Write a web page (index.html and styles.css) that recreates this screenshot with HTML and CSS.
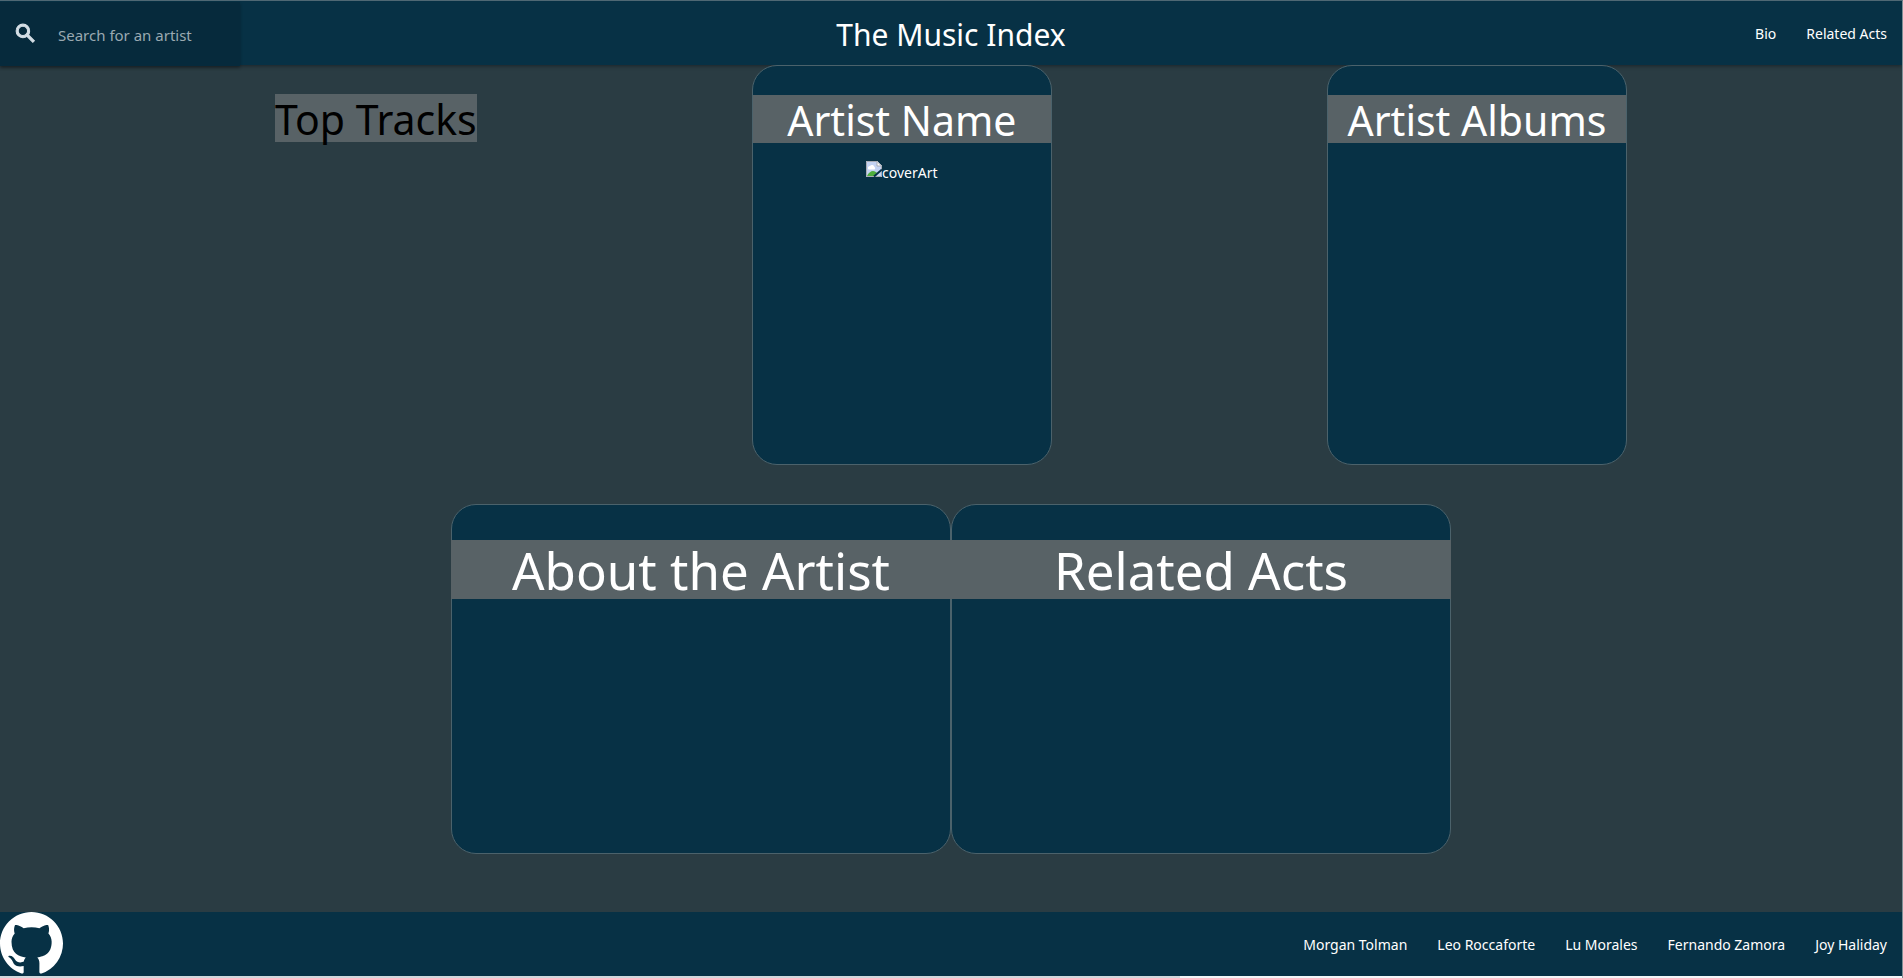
FILE: index.html
```
<!DOCTYPE html>
<html lang="en">
<head>
<meta charset="utf-8">
<title>The Music Index</title>
<link rel="stylesheet" href="styles.css">
</head>
<body>
<header class="navbar">
  <form class="search" role="search">
    <label class="search-label" for="artist" aria-label="Search">
      <svg class="search-icon" viewBox="0 0 24 24" aria-hidden="true"><path d="M15.5 14h-.79l-.28-.27A6.47 6.47 0 0 0 16 9.5 6.5 6.5 0 1 0 9.5 16c1.61 0 3.09-.59 4.23-1.57l.27.28v.79l5 4.99L20.49 19l-4.99-5zm-6 0C7.01 14 5 11.99 5 9.5S7.01 5 9.5 5 14 7.01 14 9.5 11.99 14 9.5 14z"/></svg>
    </label>
    <input class="search-input" id="artist" type="search" placeholder="Search for an artist">
  </form>
  <a class="brand" href="#">The Music Index</a>
  <nav class="links">
    <a href="#bio">Bio</a>
    <a href="#related">Related Acts</a>
  </nav>
</header>
<main class="content">
  <div class="row row-top">
    <section class="tracks"><h3 class="title">Top Tracks</h3></section>
    <section class="card card-tall">
      <h3 class="title">Artist Name</h3>
      <div class="cover">
        <svg class="cover-icon" viewBox="0 0 16 16" aria-hidden="true">
          <path fill="#c3d3f3" d="M0 0h11l5 5v11H0z"/>
          <path fill="#fff" d="M2 7.500a2 2 0 0 1 2-2.500 2.500 2.500 0 0 1 4.500 1 1.500 1.500 0 0 1 0 2.500H3a1 1 0 0 1-1-1z"/>
          <path fill="#4fae3e" d="M1 15c1-3 4-5 6-5s3 1 4 2l-3 3z"/>
          <path fill="#fff" d="M11 0v5h5z"/>
          <path fill="none" stroke="#a9adb5" d="M.5 15.500V.5h10.500l4.500 4.500v10.500H.5M11 .5V5h4.500"/>
          <path fill="none" stroke="#073145" stroke-width="2" d="M8 15.500l8-7"/>
        </svg><span>coverArt</span>
      </div>
    </section>
    <section class="card card-tall"><h3 class="title">Artist Albums</h3></section>
  </div>
  <div class="row row-bottom">
    <section class="card card-wide" id="bio"><h2 class="title title-large">About the Artist</h2></section>
    <section class="card card-wide" id="related"><h2 class="title title-large">Related Acts</h2></section>
  </div>
</main>
<footer class="footer">
  <a class="github" href="#" aria-label="GitHub">
    <svg class="github-icon" viewBox="0 0 16 16" aria-hidden="true"><path d="M8 0C3.580 0 0 3.580 0 8c0 3.540 2.290 6.530 5.470 7.590.4.070.55-.17.55-.38 0-.19-.01-.82-.01-1.490-2.010.37-2.530-.49-2.690-.94-.09-.23-.48-.94-.82-1.130-.28-.15-.68-.52-.01-.53.63-.01 1.080.58 1.230.82.72 1.210 1.870.87 2.330.66.07-.52.28-.87.51-1.070-1.780-.2-3.640-.89-3.640-3.950 0-.87.31-1.590.82-2.150-.08-.2-.36-1.020.08-2.120 0 0 .67-.21 2.200.82.64-.18 1.320-.27 2-.27s1.360.09 2 .27c1.530-1.040 2.200-.82 2.200-.82.44 1.100.16 1.920.08 2.120.51.56.82 1.270.82 2.150 0 3.070-1.870 3.750-3.650 3.950.29.25.54.73.54 1.480 0 1.070-.01 1.930-.01 2.200 0 .21.15.46.55.38A8.010 8.010 0 0 0 16 8c0-4.420-3.580-8-8-8z"/></svg>
  </a>
  <nav class="links">
    <a href="#">Morgan Tolman</a>
    <a href="#">Leo Roccaforte</a>
    <a href="#">Lu Morales</a>
    <a href="#">Fernando Zamora</a>
    <a href="#">Joy Haliday</a>
  </nav>
</footer>
</body>
</html>
```
FILE: styles.css
```
* { box-sizing: border-box; }
body {
  margin: 0;
  min-height: 100vh;
  padding-bottom: 2px;
  display: flex;
  flex-direction: column;
  background:
    linear-gradient(90deg, #d0d8dc 62%, #f1f5f7 62%) bottom / 100% 2px no-repeat,
    #2a3c43;
  border-top: 1px solid #4f6874;
  border-right: 1px solid #7f8f96;
  color: #fff;
  font-family: "Segoe UI", "Noto Sans", "Open Sans", sans-serif;
  font-size: 14px;
  line-height: 21px;
}
a { color: inherit; text-decoration: none; }
.navbar {
  display: grid;
  grid-template-columns: 1fr auto 1fr;
  align-items: center;
  height: 64px;
  background: #073145;
  box-shadow: 0 1px 4px rgba(0, 0, 0, .4);
}
.search {
  display: flex;
  align-items: center;
  width: 240px;
  height: 64px;
  background: #062a3c;
  box-shadow: 0 2px 3px rgba(0, 0, 0, .3);
}
.search-label { display: flex; padding: 0 20px 0 13px; }
.search-icon {
  width: 25px;
  height: 25px;
  fill: #d5dfe6;
  stroke: #d5dfe6;
  stroke-width: 1;
}
.search-input {
  flex: 1;
  min-width: 0;
  height: 64px;
  padding: 2px 0 0;
  border: 0;
  outline: 0;
  background: transparent;
  color: #fff;
  font: inherit;
  font-size: 15px;
}
.search-input::placeholder { color: #9aa9b1; opacity: 1; }
.brand { padding-top: 2px; font-size: 30px; line-height: 62px; }
.links { display: flex; justify-self: end; }
.links a { padding: 0 15px; line-height: 65px; }
.content { flex: 1; }
.row { display: flex; }
.row-top { justify-content: space-evenly; margin-bottom: 39px; }
.row-bottom { justify-content: center; }
.card {
  position: relative;
  background: #073145;
  border: 1px solid #4b626b;
  border-radius: 25px;
  text-align: center;
}
.card-tall { width: 300px; min-height: 400px; }
.card-wide { width: 500px; min-height: 350px; }
.title {
  margin: 29px 0 18px;
  padding-top: 2px;
  background: #586266;
  font-size: 41px;
  font-weight: 400;
  line-height: 46px;
}
.tracks .title { color: #000; }
.title-large { margin: 35px -1px; font-size: 51px; line-height: 57px; }
.cover { display: flex; justify-content: center; line-height: 23px; }
.cover-icon { width: 16px; height: 16px; }
.footer {
  display: flex;
  align-items: flex-start;
  justify-content: space-between;
  height: 64px;
  background: #073145;
}
.github { display: flex; }
.github-icon { width: 63px; height: 63px; fill: #fff; }
```
